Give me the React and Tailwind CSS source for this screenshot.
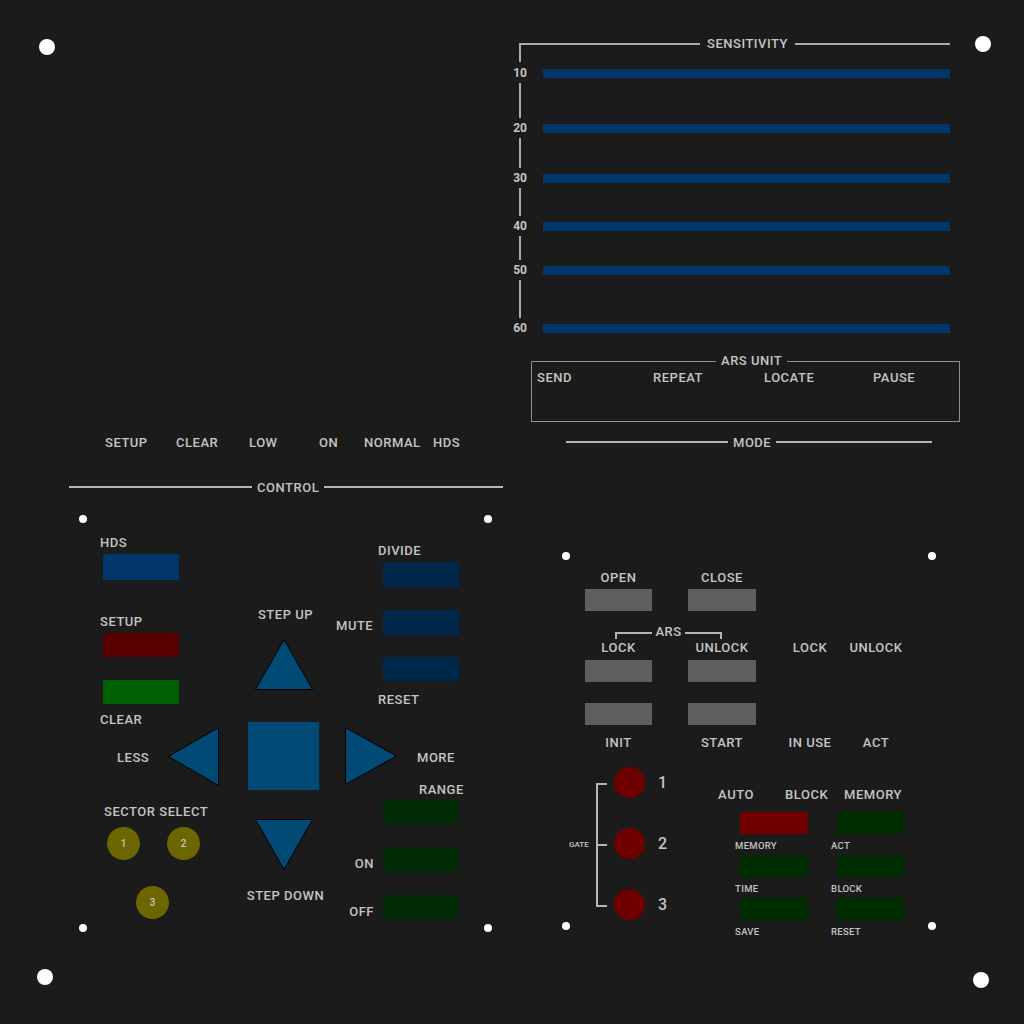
import React from 'react';

const txt = 'text-[13px] leading-[14px] font-medium text-[#c4c4c4] tracking-[0.04em] whitespace-nowrap';
const small = 'text-[9.5px] leading-[10px] font-medium text-[#c4c4c4] tracking-[0.03em] whitespace-nowrap';

function Label({ children, className = '' }) {
    return <div className={`${txt} ${className}`}>{children}</div>;
}

function Screw({ className }) {
    return <div className={`absolute w-[16px] h-[16px] rounded-full bg-white ${className}`} />;
}

function Dot({ className }) {
    return <div className={`absolute w-[8px] h-[8px] rounded-full bg-white ${className}`} />;
}

function Tri({ dir, w, h }) {
    const pts = {
        up: `${w / 2},0.5 ${w - 0.5},${h - 0.5} 0.5,${h - 0.5}`,
        down: `0.5,0.5 ${w - 0.5},0.5 ${w / 2},${h - 0.5}`,
        left: `0.5,${h / 2} ${w - 0.5},0.5 ${w - 0.5},${h - 0.5}`,
        right: `0.5,0.5 ${w - 0.5},${h / 2} 0.5,${h - 0.5}`,
    }[dir];
    return (
        <svg width={w} height={h} className="block shrink-0">
            <polygon points={pts} fill="#004a75" stroke="#000" strokeWidth="1" />
        </svg>
    );
}

const sensRows = [
    { n: '10', gap: 'h-[41px]' },
    { n: '20', gap: 'h-[36px]' },
    { n: '30', gap: 'h-[34px]' },
    { n: '40', gap: 'h-[30px]' },
    { n: '50', gap: 'h-[44px]' },
    { n: '60', gap: null },
];

function Sensitivity() {
    return (
        <div>
            <div className="flex ml-[9px] mt-[43px] w-[431px]">
                <div className="w-[181px] h-[19px] border-t-2 border-l-2 border-[#aaa]" />
                <span className={`${txt} px-[7px] -mt-[6px]`}>SENSITIVITY</span>
                <div className="flex-1 h-[2px] bg-[#aaa]" />
            </div>
            <div className="mt-[4px]">
                {sensRows.map(r => (
                    <React.Fragment key={r.n}>
                        <div className="flex items-center h-[14px]">
                            <div className="w-[20px] text-center text-[12px] leading-[14px] font-bold text-[#c4c4c4] tracking-[-0.02em]">{r.n}</div>
                            <div className="ml-[13px] w-[407px] h-[9px] bg-[#00376b]" />
                        </div>
                        {r.gap && (
                            <div className={`${r.gap} w-[20px] flex justify-center py-[3px]`}>
                                <div className="w-[2px] bg-[#aaa]" />
                            </div>
                        )}
                    </React.Fragment>
                ))}
            </div>
        </div>
    );
}

function ArsUnit() {
    return (
        <div className="relative ml-[21px] mt-[26px] w-[429px] h-[61px] border border-[#8f8f8f]">
            <span className={`${txt} absolute left-[184px] -top-[8px] px-[5px] bg-[#1b1b1b]`}>ARS UNIT</span>
            <div className="flex pl-[5px] pt-[9px]">
                <Label className="w-[116px]">SEND</Label>
                <Label className="w-[111px]">REPEAT</Label>
                <Label className="w-[109px]">LOCATE</Label>
                <Label>PAUSE</Label>
            </div>
        </div>
    );
}

function Cols({ a, b, c, d, className = '' }) {
    return (
        <div className={`flex ${className}`}>
            <div className="ml-[19px] w-[67px] flex justify-center">{a}</div>
            <div className="ml-[36px] w-[68px] flex justify-center">{b}</div>
            <div className="ml-[24px] w-[60px] flex justify-center">{c}</div>
            <div className="ml-[6px] w-[60px] flex justify-center">{d}</div>
        </div>
    );
}

const grayBar = <div className="w-[67px] h-[22px] bg-[#5e5e5e]" />;
const grayBarB = <div className="w-[68px] h-[22px] bg-[#5e5e5e]" />;

function RightPanel() {
    return (
        <div className="relative ml-[56px] mt-[107px] w-[366px] h-[370px]">
            <Dot className="-left-[4px] -top-[4px]" />
            <Dot className="-right-[4px] -top-[4px]" />
            <Dot className="-left-[4px] -bottom-[4px]" />
            <Dot className="-right-[4px] -bottom-[4px]" />

            <Cols className="pt-[15px]" a={<Label>OPEN</Label>} b={<Label>CLOSE</Label>} />
            <Cols className="mt-[4px]" a={grayBar} b={grayBarB} />
            <div className="ml-[49px] mt-[21px] w-[107px] h-[7px] border-t-2 border-l-2 border-r-2 border-[#b4b4b4] flex justify-center">
                <span className={`${txt} -mt-[9px] px-[3px] bg-[#1b1b1b] h-[14px]`}>ARS</span>
            </div>
            <Cols className="mt-[2px]" a={<Label>LOCK</Label>} b={<Label>UNLOCK</Label>} c={<Label>LOCK</Label>} d={<Label>UNLOCK</Label>} />
            <Cols className="mt-[5px]" a={grayBar} b={grayBarB} />
            <Cols className="mt-[21px]" a={grayBar} b={grayBarB} />
            <Cols className="mt-[11px]" a={<Label>INIT</Label>} b={<Label>START</Label>} c={<Label>IN USE</Label>} d={<Label>ACT</Label>} />

            <div className="flex items-start mt-[17px]">
                <div className="flex items-center ml-[3px] mt-[16px] h-[124px]">
                    <span className="text-[8px] leading-[10px] font-medium text-[#c4c4c4] w-[27px]">GATE</span>
                    <div className="w-[11px] h-full border-l-2 border-t-2 border-b-2 border-[#b4b4b4] flex items-center">
                        <div className="w-[9px] h-[2px] bg-[#b4b4b4]" />
                    </div>
                </div>
                <div className="ml-[7px] flex flex-col gap-[30px]">
                    {['1', '2', '3'].map(n => (
                        <div key={n} className="flex items-center">
                            <div className="w-[31px] h-[31px] rounded-full bg-[#6e0000]" />
                            <span className="ml-[13px] text-[16px] leading-[16px] font-medium text-[#c4c4c4]">{n}</span>
                        </div>
                    ))}
                </div>
                <div className="ml-[51px] mt-[21px]">
                    <div className="flex">
                        <Label className="w-[67px]">AUTO</Label>
                        <Label className="w-[59px]">BLOCK</Label>
                        <Label>MEMORY</Label>
                    </div>
                    <div className="flex mt-[10px]">
                        <div className="ml-[17px] w-[96px]">
                            {[['bg-[#700000]', 'MEMORY'], ['bg-[#002e00]', 'TIME'], ['bg-[#002e00]', 'SAVE']].map(([c, l]) => (
                                <div key={l} className="mb-[4px]">
                                    <div className={`ml-[5px] w-[68px] h-[22px] ${c}`} />
                                    <div className={`${small} mt-[7px]`}>{l}</div>
                                </div>
                            ))}
                        </div>
                        <div>
                            {['ACT', 'BLOCK', 'RESET'].map(l => (
                                <div key={l} className="mb-[4px]">
                                    <div className="ml-[6px] w-[67px] h-[22px] bg-[#002e00]" />
                                    <div className={`${small} mt-[7px]`}>{l}</div>
                                </div>
                            ))}
                        </div>
                    </div>
                </div>
            </div>
        </div>
    );
}

function Sector({ n }) {
    return (
        <div className="w-[33px] h-[33px] rounded-full bg-[#6b6600] flex items-center justify-center text-[10px] font-medium text-[#c4c4c4]">{n}</div>
    );
}

function ControlPanel() {
    return (
        <div className="relative ml-[14px] mt-[25px] w-[405px] h-[409px]">
            <Dot className="-left-[4px] -top-[4px]" />
            <Dot className="-right-[4px] -top-[4px]" />
            <Dot className="-left-[4px] -bottom-[4px]" />
            <Dot className="-right-[4px] -bottom-[4px]" />

            {/* upper band */}
            <div className="flex h-[203px]">
                <div className="w-[150px] pl-[17px] pt-[17px]">
                    <Label>HDS</Label>
                    <div className="ml-[3px] mt-[4px] w-[76px] h-[26px] bg-[#00366a]" />
                    <Label className="mt-[35px]">SETUP</Label>
                    <div className="ml-[3px] mt-[4px] w-[76px] h-[24px] bg-[#5a0000]" />
                    <div className="ml-[3px] mt-[23px] w-[76px] h-[24px] bg-[#005f00]" />
                    <Label className="mt-[9px]">CLEAR</Label>
                </div>
                <div className="w-[101px] flex flex-col items-center pt-[89px]">
                    <Label className="ml-[4px]">STEP UP</Label>
                    <div className="mt-[17px]"><Tri dir="up" w={58} h={51} /></div>
                </div>
                <div className="flex-1 pt-[25px]">
                    <Label className="ml-[44px]">DIVIDE</Label>
                    <div className="ml-[49px] mt-[4px] w-[76px] h-[25px] bg-[#00284a]" />
                    <div className="flex items-center mt-[23px]">
                        <Label className="w-[49px] pl-[2px] pt-[7px]">MUTE</Label>
                        <div className="w-[76px] h-[25px] bg-[#00284a]" />
                    </div>
                    <div className="ml-[49px] mt-[22px] w-[76px] h-[24px] bg-[#00284a]" />
                    <Label className="ml-[44px] mt-[12px]">RESET</Label>
                </div>
            </div>

            {/* d-pad row */}
            <div className="flex items-center h-[68px]">
                <Label className="ml-[34px] w-[51px] pt-[4px]">LESS</Label>
                <Tri dir="left" w={51} h={59} />
                <div className="ml-[29px] w-[71px] h-[68px] bg-[#004a75]" />
                <div className="ml-[26px]"><Tri dir="right" w={52} h={58} /></div>
                <Label className="ml-[20px] pt-[4px]">MORE</Label>
            </div>

            {/* lower band */}
            <div className="flex">
                <div className="w-[150px]">
                    <Label className="ml-[21px] mt-[15px]">SECTOR SELECT</Label>
                    <div className="flex gap-[27px] ml-[24px] mt-[8px]">
                        <Sector n="1" />
                        <Sector n="2" />
                    </div>
                    <div className="ml-[53px] mt-[26px]"><Sector n="3" /></div>
                </div>
                <div className="w-[101px] flex flex-col items-center pt-[29px]">
                    <Tri dir="down" w={58} h={51} />
                    <Label className="mt-[19px] ml-[4px]">STEP DOWN</Label>
                </div>
                <div className="flex-1 -mt-[7px]">
                    <Label className="ml-[85px]">RANGE</Label>
                    <div className="ml-[49px] mt-[3px] w-[75px] h-[24px] bg-[#002b04]" />
                    <div className="flex items-center mt-[24px]">
                        <Label className="w-[49px] text-right pr-[9px] pt-[7px]">ON</Label>
                        <div className="w-[75px] h-[24px] bg-[#002b04]" />
                    </div>
                    <div className="flex items-center mt-[23px]">
                        <Label className="w-[49px] text-right pr-[9px] pt-[9px]">OFF</Label>
                        <div className="w-[75px] h-[24px] bg-[#002b04]" />
                    </div>
                </div>
            </div>
        </div>
    );
}

export default function App() {
    return (
        <div className="relative w-[1024px] h-[1024px] bg-[#1b1b1b] overflow-hidden flex font-[family-name:Roboto,sans-serif]">
            <Screw className="left-[39px] top-[39px]" />
            <Screw className="left-[975px] top-[36px]" />
            <Screw className="left-[37px] top-[969px]" />
            <Screw className="left-[973px] top-[972px]" />

            {/* left column */}
            <div className="ml-[69px] w-[434px] pt-[436px]">
                <div className="flex ml-[36px]">
                    <Label className="w-[71px]">SETUP</Label>
                    <Label className="w-[73px]">CLEAR</Label>
                    <Label className="w-[70px]">LOW</Label>
                    <Label className="w-[45px]">ON</Label>
                    <Label className="w-[69px]">NORMAL</Label>
                    <Label>HDS</Label>
                </div>
                <div className="flex items-center mt-[30px] h-[14px]">
                    <div className="w-[183px] h-[2px] bg-[#b4b4b4]" />
                    <Label className="px-[5px] pt-[1px]">CONTROL</Label>
                    <div className="flex-1 h-[2px] bg-[#b4b4b4]" />
                </div>
                <ControlPanel />
            </div>

            {/* right column */}
            <div className="ml-[7px] w-[450px]">
                <Sensitivity />
                <ArsUnit />
                <div className="flex items-center ml-[56px] mt-[13px] w-[366px] h-[14px]">
                    <div className="w-[162px] h-[2px] bg-[#b4b4b4]" />
                    <Label className="px-[5px] pt-[1px]">MODE</Label>
                    <div className="flex-1 h-[2px] bg-[#b4b4b4]" />
                </div>
                <RightPanel />
            </div>
        </div>
    );
}
